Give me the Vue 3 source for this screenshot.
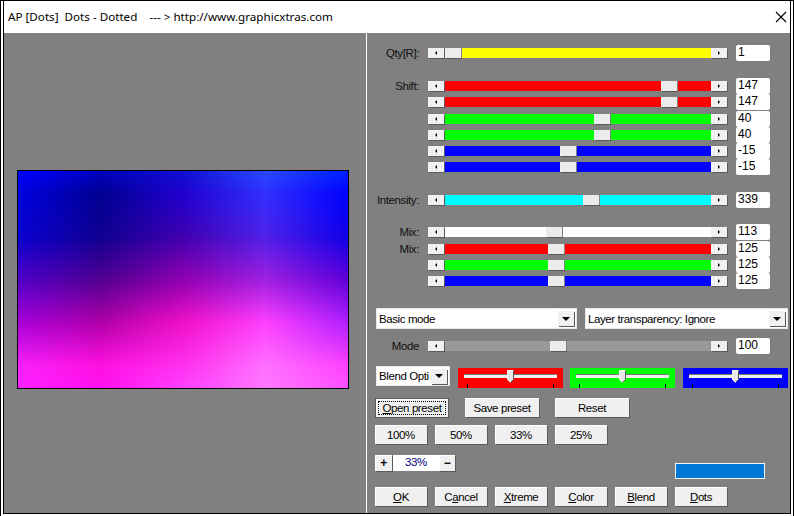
<script setup>
import { onMounted, useTemplateRef } from "vue";

const qtyRow = { id: "qty", label: "Qty[R]:", color: "#ffff00", thumb: 0, value: "1" };

const shiftRows = [
  { id: "s1", label: "Shift:", color: "#ff0000", thumb: 216, value: "147" },
  { id: "s2", label: "", color: "#ff0000", thumb: 216, value: "147" },
  { id: "s3", label: "", color: "#00ff00", thumb: 149, value: "40", tall: true },
  { id: "s4", label: "", color: "#00ff00", thumb: 149, value: "40" },
  { id: "s5", label: "", color: "#0000ff", thumb: 115, value: "-15" },
  { id: "s6", label: "", color: "#0000ff", thumb: 115, value: "-15" },
];

const intensityRow = { id: "int", label: "Intensity:", color: "#00ffff", thumb: 138, value: "339" };

const mixRows = [
  { id: "m1", label: "Mix:", color: "#ffffff", thumb: 101, value: "113" },
  { id: "m2", label: "Mix:", color: "#ff0000", thumb: 103, value: "125", tall: true },
  { id: "m3", label: "", color: "#00ff00", thumb: 103, value: "125" },
  { id: "m4", label: "", color: "#0000ff", thumb: 103, value: "125" },
];

const modeRow = { id: "mode", label: "Mode", color: "#999999", thumb: 105, value: "100" };

const colorSliders = [
  { id: "r", color: "#ff0000" },
  { id: "g", color: "#00ff00" },
  { id: "b", color: "#0000ff" },
];

const zoomButtons = ["100%", "50%", "33%", "25%"];

const actions = [
  { key: "O", rest: "K" },
  { pre: "C", key: "a", rest: "ncel" },
  { key: "X", rest: "treme" },
  { key: "C", rest: "olor" },
  { key: "B", rest: "lend" },
  { key: "D", rest: "ots" },
];

const sections = [
  { id: "a", rows: [qtyRow], cls: "sec-qty" },
  { id: "b", rows: shiftRows, cls: "sec-shift" },
  { id: "c", rows: [intensityRow], cls: "sec-int" },
  { id: "d", rows: mixRows, cls: "sec-mix" },
];

// colour grid of the filter preview, sampled at 0/25/50/75/100% across
const gridY = [0, 0.1, 0.3, 0.5, 0.7, 0.9, 1];
const grid = [
  [0x0000ff, 0x0000c0, 0x1010d0, 0x2848ff, 0x0020ff],
  [0x0000e0, 0x000090, 0x2000d0, 0x3030ff, 0x0000ff],
  [0x0800d0, 0x100090, 0x4000b0, 0x5020e8, 0x1000e8],
  [0x5000c8, 0x500090, 0x9000b0, 0xa020e0, 0x6000d8],
  [0xa800d8, 0xb000a8, 0xf010c8, 0xff40ff, 0xb020ff],
  [0xf820f8, 0xff10e0, 0xff30f0, 0xff70ff, 0xff40ff],
  [0xff20ff, 0xff10f0, 0xff40ff, 0xff78ff, 0xff50ff],
];

const preview = useTemplateRef("preview");

const mix = (a, b, t, shift) => {
  const ca = (a >> shift) & 255;
  const cb = (b >> shift) & 255;
  return ca + (cb - ca) * t;
};

onMounted(() => {
  const canvas = preview.value;
  const ctx = canvas.getContext("2d");
  const img = ctx.createImageData(canvas.width, canvas.height);

  for (let y = 0; y < canvas.height; y++) {
    const v = y / (canvas.height - 1);
    let r = 0;
    while (r < gridY.length - 2 && v > gridY[r + 1]) r++;
    const tv = (v - gridY[r]) / (gridY[r + 1] - gridY[r]);

    for (let x = 0; x < canvas.width; x++) {
      const u = (x / (canvas.width - 1)) * 4;
      const c = Math.min(Math.floor(u), 3);
      const tu = u - c;
      const i = (y * canvas.width + x) * 4;

      [16, 8, 0].forEach((shift, ch) => {
        const top = mix(grid[r][c], grid[r][c + 1], tu, shift);
        const bottom = mix(grid[r + 1][c], grid[r + 1][c + 1], tu, shift);
        img.data[i + ch] = top + (bottom - top) * tv;
      });
      img.data[i + 3] = 255;
    }
  }

  ctx.putImageData(img, 0, 0);
});
</script>

<template>
  <div class="window">
    <div class="frame">
      <header class="titlebar">
        <span class="title">AP [Dots]&nbsp; Dots - Dotted &nbsp;&nbsp; --- &gt; http://www.graphicxtras.com</span>
        <svg class="close" width="12" height="12" viewBox="0 0 12 12">
          <path d="M1 1 L11 11 M11 1 L1 11" stroke="#000" stroke-width="1.1" fill="none" />
        </svg>
      </header>

      <div class="body">
        <section class="preview-pane">
          <canvas ref="preview" class="preview" width="330" height="217"></canvas>
        </section>

        <section class="controls">
          <div v-for="sec in sections" :key="sec.id" class="slider-group" :class="sec.cls">
            <div v-for="row in sec.rows" :key="row.id" class="row" :class="{ 'row-tall': row.tall }">
              <label class="row-label">{{ row.label }}</label>
              <div class="scroll">
                <button class="arrow"><i class="tri tri-left" /></button>
                <div class="track" :style="{ background: row.color }">
                  <span class="thumb" :style="{ left: row.thumb + 'px' }" />
                </div>
                <button class="arrow"><i class="tri tri-right" /></button>
              </div>
              <div class="value">{{ row.value }}</div>
            </div>
          </div>

          <div class="selects">
            <div class="select select-mode">
              <span class="select-text">Basic mode</span>
              <span class="drop"><i class="tri tri-down" /></span>
            </div>
            <div class="select select-layer">
              <span class="select-text">Layer transparency: Ignore</span>
              <span class="drop"><i class="tri tri-down" /></span>
            </div>
          </div>

          <div class="row row-mode">
            <label class="row-label">{{ modeRow.label }}</label>
            <div class="scroll">
              <button class="arrow"><i class="tri tri-left" /></button>
              <div class="track" :style="{ background: modeRow.color }">
                <span class="thumb" :style="{ left: modeRow.thumb + 'px' }" />
              </div>
              <button class="arrow"><i class="tri tri-right" /></button>
            </div>
            <div class="value">{{ modeRow.value }}</div>
          </div>

          <div class="blend-row">
            <div class="select select-blend">
              <span class="select-text">Blend Opti</span>
              <span class="drop"><i class="tri tri-down" /></span>
            </div>
            <div v-for="s in colorSliders" :key="s.id" class="color-slider" :style="{ background: s.color }">
              <div class="slot">
                <svg class="slot-thumb" width="7" height="13" viewBox="0 0 7 13">
                  <path d="M0.5 0.5 H6.5 V9.5 L3.5 12.5 L0.5 9.5 Z" fill="#e6e6e6" stroke="#fff" />
                  <path d="M6.5 0.5 V9.5 L3.5 12.5" fill="none" stroke="#555" />
                </svg>
              </div>
              <i class="tick tick-a" />
              <i class="tick tick-b" />
            </div>
          </div>

          <div class="preset-row">
            <button class="btn btn-focus"><span class="focus-ring"><u>O</u>pen preset</span></button>
            <button class="btn btn-save">Save preset</button>
            <button class="btn btn-reset">Reset</button>
          </div>

          <div class="percent-row">
            <button v-for="z in zoomButtons" :key="z" class="btn btn-small">{{ z }}</button>
          </div>

          <div class="zoom-row">
            <button class="btn btn-step">+</button>
            <div class="zoom-value">33%</div>
            <button class="btn btn-step btn-minus">−</button>
            <div class="swatch"></div>
          </div>

          <div class="action-row">
            <button v-for="a in actions" :key="a.key + a.rest" class="btn btn-small">{{ a.pre }}<u>{{ a.key }}</u>{{ a.rest }}</button>
          </div>
        </section>
      </div>
    </div>
  </div>
</template>

<style>
html,
body {
  margin: 0;
  background: #ffffff;
}
</style>

<style scoped>
* {
  box-sizing: border-box;
}

.window {
  width: 794px;
  height: 516px;
  padding: 0 2px 2px;
  background: #fff;
  border: 1px solid #000;
  border-bottom: 0;
  font-family: "Liberation Sans", Arial, sans-serif;
  font-size: 11.5px;
  letter-spacing: -0.4px;
  color: #000;
}

.frame {
  height: 100%;
  display: flex;
  flex-direction: column;
  border: 1px solid #000;
  border-top: 0;
}

.titlebar {
  height: 31px;
  flex: none;
  display: flex;
  align-items: center;
  justify-content: space-between;
  padding: 0 3px 0 4px;
  font-family: "Noto Sans", sans-serif;
  font-size: 11.65px;
  letter-spacing: 0;
}

.body {
  flex: 1;
  display: flex;
  padding-top: 1px;
  min-height: 0;
}

.preview-pane {
  width: 362px;
  flex: none;
  background: #808080;
  padding: 137px 0 0 13px;
}

.preview {
  display: block;
  width: 332px;
  height: 219px;
  border: 1px solid #000;
}

.controls {
  flex: 1;
  background: #808080;
  border-left: 1px solid #fff;
  padding: 12px 0 0 8px;
  min-width: 0;
}

.slider-group {
  display: flex;
  flex-direction: column;
}

.sec-shift {
  margin-top: 17px;
}

.sec-int {
  margin-top: 17px;
}

.sec-mix {
  margin-top: 16px;
}

.row {
  display: flex;
  align-items: center;
  height: 16px;
}

.row-tall {
  height: 17px;
}

.row-label {
  width: 44px;
  margin-right: 9px;
  flex: none;
  text-align: right;
  white-space: nowrap;
  color: #111;
}

.scroll {
  display: flex;
  width: 299px;
  height: 10px;
  flex: none;
}

.arrow {
  width: 16px;
  height: 10px;
  flex: none;
  padding: 0;
  border: 0;
  background: #f0f0f0;
  box-shadow: 1px 1px 0 #5a5a5a;
  display: flex;
  align-items: center;
  justify-content: center;
}

.tri {
  display: block;
  width: 0;
  height: 0;
}

.tri-left {
  border-top: 2px solid transparent;
  border-bottom: 2px solid transparent;
  border-right: 2px solid #000;
}

.tri-right {
  border-top: 2px solid transparent;
  border-bottom: 2px solid transparent;
  border-left: 2px solid #000;
}

.tri-down {
  border-left: 4px solid transparent;
  border-right: 4px solid transparent;
  border-top: 4px solid #000;
}

.track {
  position: relative;
  flex: 1;
  height: 10px;
  margin-left: 1px;
}

.thumb {
  position: absolute;
  top: 0;
  width: 16px;
  height: 10px;
  background: #ececec;
  box-shadow: 1px 0 0 #808080, 1px 1px 0 #5a5a5a;
}

.value {
  width: 34px;
  height: 16px;
  margin-left: 9px;
  flex: none;
  background: #fff;
  border-radius: 2px;
  padding-left: 2px;
  line-height: 15px;
  font-size: 12px;
  letter-spacing: 0;
}

.selects {
  display: flex;
  gap: 8px;
  margin: 19px 0 0 1px;
}

.select {
  height: 21px;
  background: #fff;
  display: flex;
  align-items: center;
  justify-content: space-between;
  padding: 0 2px 0 2px;
  border: 1px solid #e8e8e8;
}

.select-mode {
  width: 201px;
}

.select-layer {
  width: 203px;
}

.select-blend {
  width: 74px;
  height: 20px;
}

.select-text {
  white-space: nowrap;
}

.drop {
  width: 16px;
  height: 15px;
  flex: none;
  background: #f0f0f0;
  box-shadow: 1px 1px 0 #5a5a5a;
  display: flex;
  align-items: center;
  justify-content: center;
}

.row-mode {
  margin-top: 9px;
}

.blend-row {
  display: flex;
  gap: 7px;
  margin: 12px 0 0 1px;
  height: 22px;
}

.blend-row .select-blend {
  margin-right: 1px;
}

.color-slider {
  position: relative;
  width: 105px;
  height: 20px;
  margin-top: 2px;
  padding: 6px 6px 0;
}

.color-slider:last-child {
  margin-left: 1px;
}

.slot {
  position: relative;
  height: 4px;
  background: #f0f0f0;
  border-top: 1px solid #777;
}

.slot-thumb {
  position: absolute;
  left: 43px;
  top: -5px;
}

.tick {
  position: absolute;
  bottom: 0;
  width: 1px;
  height: 4px;
  background: #000;
}

.tick-a {
  left: 9px;
}

.tick-b {
  left: 95px;
}

.btn {
  padding: 0;
  border: 0;
  background: #f0f0f0;
  box-shadow: inset 1px 1px 0 #fff, 1px 1px 0 #5a5a5a;
  font: inherit;
  letter-spacing: inherit;
  white-space: nowrap;
  color: #000;
  height: 19px;
}

.preset-row {
  display: flex;
  margin-top: 10px;
  height: 19px;
}

.btn-focus {
  width: 72px;
  height: 18px;
  margin: 1px 17px 0 1px;
  outline: 1px solid #5a5a5a;
  display: flex;
  align-items: center;
  justify-content: center;
  padding: 2px;
}

.focus-ring {
  display: block;
  width: 100%;
  line-height: 12px;
  border: 1px dotted #000;
}

.btn-save {
  width: 74px;
  margin-right: 16px;
}

.btn-reset {
  width: 74px;
}

.percent-row {
  display: flex;
  gap: 8px;
  margin-top: 8px;
}

.btn-small {
  width: 52px;
}

.zoom-row {
  display: flex;
  margin-top: 11px;
  height: 16px;
}

.btn-step {
  width: 17px;
  height: 16px;
  flex: none;
  font-size: 12px;
  font-weight: bold;
  line-height: 14px;
}

.btn-minus {
  width: 16px;
}

.zoom-value {
  width: 46px;
  height: 16px;
  flex: none;
  background: #fff;
  color: #000080;
  text-align: center;
  line-height: 15px;
  margin-left: 1px;
}

.swatch {
  width: 90px;
  height: 16px;
  flex: none;
  margin: 8px 0 0 220px;
  background: #0078d7;
  border: 1px solid #f4f4f4;
}

.action-row {
  display: flex;
  gap: 8px;
  margin-top: 16px;
}
</style>
